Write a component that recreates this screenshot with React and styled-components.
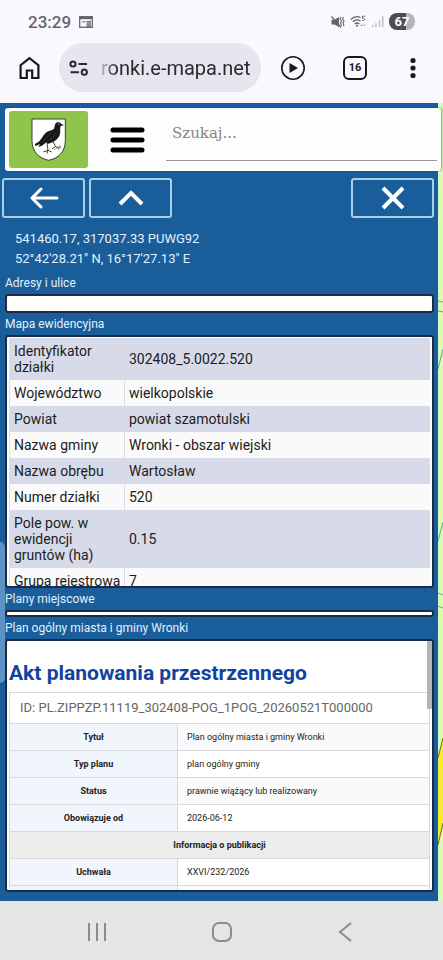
import React, { useState } from 'react';
import styled, { createGlobalStyle, css } from 'styled-components';

const GlobalStyle = createGlobalStyle`
  * {
    box-sizing: border-box;
  }

  body {
    margin: 0;
    font-family: Roboto, 'Noto Sans', sans-serif;
    color: #222;
  }

  button {
    padding: 0;
    border: 0;
    background: none;
    color: inherit;
    font: inherit;
    cursor: pointer;
  }

  svg {
    display: block;
  }
`;

const Screen = styled.div`
  display: flex;
  flex-direction: column;
  height: 100vh;
  overflow: hidden;
  background: #f9f8fe;
`;

/* phone status bar */
const StatusBar = styled.div`
  display: flex;
  align-items: center;
  gap: 8px;
  height: 43px;
  padding: 0 28px;
  color: #66656b;
`;

const Clock = styled.span`
  font-size: 17px;
  font-weight: 500;
`;

const StatusIcons = styled.div`
  display: flex;
  align-items: center;
  gap: 5px;
  margin-left: auto;
`;

const Battery = styled.span`
  width: 26px;
  border-radius: 8px;
  background: linear-gradient(90deg, #4d4c51 67%, #b5b4ba 67%);
  color: #fff;
  font-size: 13px;
  font-weight: 700;
  line-height: 17px;
  text-align: center;
`;

/* browser toolbar */
const Toolbar = styled.div`
  display: flex;
  align-items: center;
  gap: 18px;
  padding: 0 22px 11px 17px;
  color: #19191c;
`;

const AddressBar = styled.div`
  display: flex;
  flex: 1;
  align-items: center;
  gap: 12px;
  min-width: 0;
  height: 49px;
  margin-right: 2px;
  padding: 0 8px 0 10px;
  border-radius: 25px;
  background: #e7e5ee;
`;

const AddressInput = styled.input`
  flex: 1;
  width: 0;
  min-width: 0;
  padding: 0;
  border: 0;
  outline: 0;
  background: none;
  color: #2b2a30;
  font-family: Roboto, sans-serif;
  font-size: 20px;
  mask-image: linear-gradient(90deg, rgba(0, 0, 0, .2), #000 14px);
`;

const ToolbarActions = styled.div`
  display: flex;
  align-items: center;
  gap: 38px;
`;

const TabsButton = styled.button`
  width: 24px;
  height: 24px;
  border: 2px solid #19191c;
  border-radius: 6px;
  font-size: 11px;
  font-weight: 700;
  line-height: 20px;
`;

/* map page */
const Page = styled.main`
  position: relative;
  display: flex;
  flex: 1;
  min-height: 0;
  background: #d9fab9;
`;

const Panel = styled.div`
  display: flex;
  flex: 1;
  flex-direction: column;
  min-width: 0;
  padding: 5px 4px 9px 5px;
  background: #195e9b;
`;

const MapStrip = styled.div`
  width: 5px;

  svg {
    width: 100%;
    height: 100%;
  }
`;

const Handle = styled.button`
  position: absolute;
  top: 55%;
  left: 0;
  width: 5px;
  height: 141px;
  border-radius: 0 5px 5px 0;
  background: #5c93c4;
`;

const Header = styled.header`
  position: relative;
  z-index: 1;
  display: flex;
  flex-shrink: 0;
  height: 63px;
  margin-right: -7px;
  padding: 3px 4px;
  border-radius: 3px;
  background: #fdfdfd;
  box-shadow: 1px 0 2px rgba(0, 0, 0, .35);
`;

const Logo = styled.a`
  display: flex;
  align-items: center;
  justify-content: center;
  width: 79px;
  height: 57px;
  border-radius: 3px;
  background: #8fc54a;
`;

const MenuButton = styled.button`
  width: 78px;

  svg {
    margin: auto;
  }
`;

const SearchInput = styled.input`
  flex: 1;
  min-width: 0;
  height: 50px;
  padding: 0 6px 6px;
  border: 0;
  border-bottom: 1px solid #9a9a9a;
  outline: 0;
  background: none;
  font-family: 'DejaVu Serif', serif;
  font-size: 15px;

  &::placeholder {
    color: #858585;
    opacity: 1;
  }
`;

const ButtonRow = styled.div`
  display: flex;
  flex-shrink: 0;
  gap: 4px;
  margin: 7px 0 0 -3px;
`;

const PanelButton = styled.button`
  display: flex;
  align-items: center;
  justify-content: center;
  width: 83px;
  height: 40px;
  border: 2px solid #a9d0ea;
  border-radius: 3px;
  ${props => props.$last && css`
    margin-left: auto;
  `}
`;

const Coordinates = styled.div`
  padding: 11px 10px 3px;
  color: #e3f1fb;
  font-size: 13px;
  line-height: 20px;
`;

const SectionTitle = styled.h2`
  flex-shrink: 0;
  margin: 0;
  color: #e3f1fb;
  font-size: 12px;
  font-weight: 400;
  line-height: 22px;
`;

const Box = styled.div`
  position: relative;
  flex: ${props => (props.$grow ? '1' : '0 0 auto')};
  min-height: 0;
  height: ${props => (props.$height ? `${props.$height}px` : 'auto')};
  padding: 1px 2px;
  border: 2px solid #1a2c48;
  border-radius: 3px;
  background: #fff;
  overflow: hidden;
`;

const ParcelTable = styled.table`
  width: 100%;
  border-collapse: collapse;
  table-layout: fixed;
  font-size: 14px;
  line-height: 16px;
  color: #1c1c22;

  tr {
    background: #fafafa;
  }

  tr:nth-child(odd) {
    background: #d7dbe9;
  }

  th,
  td {
    padding: 5px 2px 5px 4px;
    border-left: 1px solid #dcdce2;
    font-weight: 400;
    text-align: left;
  }

  th {
    width: 115px;
  }
`;

const PlanTitle = styled.h1`
  margin: 18px 0 6px;
  color: #12439c;
  font-size: 21px;
  font-weight: 700;
  line-height: 26px;
`;

const PlanTable = styled.table`
  width: 100%;
  border-collapse: collapse;
  table-layout: fixed;
  font-size: 9px;
  line-height: 14px;

  th,
  td {
    height: 27px;
    padding: 6px 9px;
    border: 1px solid #d9d9dc;
    text-align: left;
  }

  th {
    background: #f1f5fc;
    text-align: center;
  }

  tr:nth-child(odd) td {
    background: #fafafa;
  }
`;

const PlanId = styled.caption`
  padding: 0 10px;
  border: 1px solid #d9d9dc;
  border-bottom: 0;
  color: #666;
  font-size: 13px;
  line-height: 30px;
  text-align: left;
`;

const GroupHeading = styled.th`
  ${PlanTable} & {
    background: #ececec;
  }
`;

const ScrollThumb = styled.div`
  position: absolute;
  top: 0;
  right: 0;
  width: 5px;
  height: 68px;
  background: #b5b5b7;
`;

const NavBar = styled.nav`
  display: flex;
  align-items: center;
  justify-content: space-between;
  height: 59px;
  padding: 2px 85px 0;
  background: #e5e5e5;
  color: #8b8b8b;
`;

const parcelRows = [
  ['Identyfikator działki', '302408_5.0022.520'],
  ['Województwo', 'wielkopolskie'],
  ['Powiat', 'powiat szamotulski'],
  ['Nazwa gminy', 'Wronki - obszar wiejski'],
  ['Nazwa obrębu', 'Wartosław'],
  ['Numer działki', '520'],
  ['Pole pow. w ewidencji gruntów (ha)', '0.15'],
  ['Grupa rejestrowa', '7'],
];

const planRows = [
  ['Tytuł', 'Plan ogólny miasta i gminy Wronki'],
  ['Typ planu', 'plan ogólny gminy'],
  ['Status', 'prawnie wiążący lub realizowany'],
  ['Obowiązuje od', '2026-06-12'],
  ['Informacja o publikacji'],
  ['Uchwała', 'XXVI/232/2026'],
  ['', ''],
];

function CalendarIcon() {
  return (
    <svg width="14" height="12" viewBox="0 0 14 12" fill="none" stroke="currentColor">
      <rect x="0.7" y="0.7" width="12.6" height="10.6" strokeWidth="1.3" />
      <path d="M1 2h12" strokeWidth="2.4" />
      <path d="M3 5.8h3.5" strokeWidth="1" />
      <path d="M7.5 5.8H12M7.5 8H12M7.5 10H12" strokeWidth="1.4" />
    </svg>
  );
}

function MuteIcon() {
  return (
    <svg width="14" height="12" viewBox="0 0 14 12" fill="none" stroke="currentColor">
      <path d="M0.5 3.8h3L8 1v10L3.5 8.500h-3z" fill="currentColor" stroke="none" />
      <path d="M0.5 0.5l9.500 11" strokeWidth="1.3" />
      <path d="M10 1l-1 2 1.5 2-1 2 1 3M12.5 1l-1 2 1.5 2-1 2 1 3" strokeWidth="1.1" />
    </svg>
  );
}

function WifiIcon() {
  return (
    <svg width="17" height="13" viewBox="0 0 17 13" fill="none" stroke="currentColor" strokeWidth="1.3">
      <path d="M0.8 4.5Q5.5 0 10.5 2.5M2.8 6.8Q6.5 3.5 10.5 6M4.8 9Q7 7 9.2 9" />
      <circle cx="7" cy="10.8" r="1" fill="currentColor" stroke="none" />
      <path d="M15 1.2h-2.5v2.2c3-.8 3 2.6-.2 2.1" strokeWidth="1" />
      <path d="M10 11l1.5-2 1.5 2zM13 9.5h3l-1.5 2z" fill="#b5b4ba" stroke="none" />
    </svg>
  );
}

function SignalIcon() {
  return (
    <svg width="12" height="13" viewBox="0 0 12 13" stroke="#c0bfc5" strokeWidth="1.5">
      <path d="M1 10v2M4 8v4M7.500 5v7M10.700 1v11" />
    </svg>
  );
}

function HomeIcon() {
  return (
    <svg width="24" height="24" viewBox="0 0 24 24" fill="none" stroke="currentColor" strokeWidth="2.2">
      <path d="M3.6 22V9.2L12.5 2.2l8.900 7V22h-6.200v-7.5h-5.400V22z" />
    </svg>
  );
}

function TuneIcon() {
  return (
    <svg width="20" height="16" viewBox="0 0 20 16" fill="none" stroke="#2b2a30" strokeWidth="2">
      <circle cx="4" cy="4" r="2.6" />
      <path d="M9.5 4H18M1.5 12.2H10" />
      <circle cx="15.3" cy="12.2" r="2.6" />
    </svg>
  );
}

function PlayIcon() {
  return (
    <svg width="24" height="24" viewBox="0 0 24 24">
      <circle cx="12" cy="12" r="11.2" fill="none" stroke="currentColor" strokeWidth="1.6" />
      <path d="M8.5 7v10L17 12z" fill="currentColor" />
    </svg>
  );
}

function DotsIcon() {
  return (
    <svg width="16" height="22" viewBox="0 0 16 22" fill="currentColor">
      <circle cx="8" cy="3.5" r="2.6" />
      <circle cx="8" cy="11" r="2.6" />
      <circle cx="8" cy="18.5" r="2.6" />
    </svg>
  );
}

/* coat of arms: a raven holding a key */
function RavenShield() {
  return (
    <svg width="35" height="43" viewBox="0 0 105 129">
      <path d="M3 3h100v64c0 34-20 54-50 60C23 121 3 101 3 67z" fill="#fff" stroke="#35452b" strokeWidth="3" />
      <path
        d="M99 22L91 18C88 12 78 11 73 17C70 22 72 28 68 33C62 38 50 38 43 46C34 55 31 64 25 70L11 79L14 84L27 78L22 87L33 83L46 73L50 78L60 74C72 71 84 60 87 48C89 39 86 30 89 24Z"
        fill="#17191a"
      />
      <path d="M60 44C50 52 44 62 36 72M72 50C65 60 56 66 50 70" stroke="#3c4143" strokeWidth="2" fill="none" />
      <circle cx="83" cy="18" r="1.5" fill="#fff" />
      <path d="M48 75l3 22M51 97l-15 5M51 97l11 5M50 97l-2 10M66 71l8 15M74 86l14 4M74 86l-11 6" stroke="#4b4323" strokeWidth="3" fill="none" />
      <path d="M69 95l16-6M81 91l4 6" stroke="#777" strokeWidth="2" fill="none" />
      <circle cx="87" cy="86" r="3" stroke="#777" strokeWidth="2" fill="none" />
    </svg>
  );
}

function MapLines() {
  return (
    <svg viewBox="0 0 5 798" preserveAspectRatio="none" fill="none">
      <path d="M5 633L0 655V742L5 720z" fill="#f3ee2c" />
      <path d="M0 655L5 635M0 742L5 720" stroke="#68712c" />
      <path d="M0 198l5 1M0 208l5 1M0 266l5-20M0 438l5-19M0 490l5 2M0 503l5 2" stroke="#55a5bd" />
    </svg>
  );
}

export default function App() {
  const [phrase, setPhrase] = useState('');

  return (
    <>
      <GlobalStyle />
      <Screen>
        <StatusBar>
          <Clock>23:29</Clock>
          <CalendarIcon />
          <StatusIcons>
            <MuteIcon />
            <WifiIcon />
            <SignalIcon />
            <Battery>67</Battery>
          </StatusIcons>
        </StatusBar>

        <Toolbar>
          <button aria-label="Strona główna"><HomeIcon /></button>
          <AddressBar>
            <TuneIcon />
            <AddressInput aria-label="Adres" defaultValue="ronki.e-mapa.net" />
          </AddressBar>
          <ToolbarActions>
            <button aria-label="Odtwórz"><PlayIcon /></button>
            <TabsButton>16</TabsButton>
            <button aria-label="Więcej"><DotsIcon /></button>
          </ToolbarActions>
        </Toolbar>

        <Page>
          <Panel>
            <Header>
              <Logo href="#" aria-label="Wronki"><RavenShield /></Logo>
              <MenuButton aria-label="Menu">
                <svg width="35" height="26" viewBox="0 0 35 26" stroke="#000" strokeWidth="5" strokeLinecap="round">
                  <path d="M3 3h29M3 13h29M3 23h29" />
                </svg>
              </MenuButton>
              <SearchInput
                aria-label="Szukaj"
                placeholder="Szukaj..."
                value={phrase}
                onChange={e => setPhrase(e.target.value)}
              />
            </Header>

            <ButtonRow>
              <PanelButton aria-label="Wstecz">
                <svg width="30" height="24" viewBox="0 0 30 24" fill="none" stroke="#fff" strokeWidth="3" strokeLinecap="round" strokeLinejoin="round">
                  <path d="M28 12H3M12 3L3 12l9 9" />
                </svg>
              </PanelButton>
              <PanelButton aria-label="Zwiń">
                <svg width="26" height="16" viewBox="0 0 26 16" fill="none" stroke="#fff" strokeWidth="4">
                  <path d="M2 14L13 3l11 11" />
                </svg>
              </PanelButton>
              <PanelButton $last aria-label="Zamknij">
                <svg width="24" height="24" viewBox="0 0 24 24" fill="none" stroke="#fff" strokeWidth="4">
                  <path d="M2 2l20 20M22 2L2 22" />
                </svg>
              </PanelButton>
            </ButtonRow>

            <Coordinates>
              <div>541460.17, 317037.33 PUWG92</div>
              <div>52°42'28.21" N, 16°17'27.13" E</div>
            </Coordinates>

            <SectionTitle>Adresy i ulice</SectionTitle>
            <Box $height={19} />

            <SectionTitle>Mapa ewidencyjna</SectionTitle>
            <Box $height={253}>
              <ParcelTable>
                <tbody>
                  {parcelRows.map(([name, value]) => (
                    <tr key={name}>
                      <th scope="row">{name}</th>
                      <td>{value}</td>
                    </tr>
                  ))}
                </tbody>
              </ParcelTable>
            </Box>

            <SectionTitle>Plany miejscowe</SectionTitle>
            <Box $height={7} />

            <SectionTitle>Plan ogólny miasta i gminy Wronki</SectionTitle>
            <Box $grow>
              <PlanTitle>Akt planowania przestrzennego</PlanTitle>
              <PlanTable>
                <PlanId>ID: PL.ZIPPZP.11119_302408-POG_1POG_20260521T000000</PlanId>
                <colgroup>
                  <col width="40%" />
                  <col />
                </colgroup>
                <tbody>
                  {planRows.map(([name, value]) => (
                    <tr key={name}>
                      {value === undefined
                        ? <GroupHeading colSpan={2}>{name}</GroupHeading>
                        : <><th scope="row">{name}</th><td>{value}</td></>}
                    </tr>
                  ))}
                </tbody>
              </PlanTable>
              <ScrollThumb />
            </Box>
          </Panel>
          <MapStrip><MapLines /></MapStrip>
          <Handle aria-label="Zwiń panel" />
        </Page>

        <NavBar>
          <button aria-label="Ostatnie">
            <svg width="24" height="24" viewBox="0 0 24 24" fill="none" stroke="currentColor" strokeWidth="2">
              <path d="M4 3v18M12 3v18M20 3v18" />
            </svg>
          </button>
          <button aria-label="Ekran główny">
            <svg width="24" height="24" viewBox="0 0 24 24" fill="none" stroke="currentColor" strokeWidth="2">
              <rect x="3" y="3" width="18" height="18" rx="6" />
            </svg>
          </button>
          <button aria-label="Cofnij">
            <svg width="24" height="24" viewBox="0 0 24 24" fill="none" stroke="currentColor" strokeWidth="2">
              <path d="M17 3L6 12l11 9" />
            </svg>
          </button>
        </NavBar>
      </Screen>
    </>
  );
}
